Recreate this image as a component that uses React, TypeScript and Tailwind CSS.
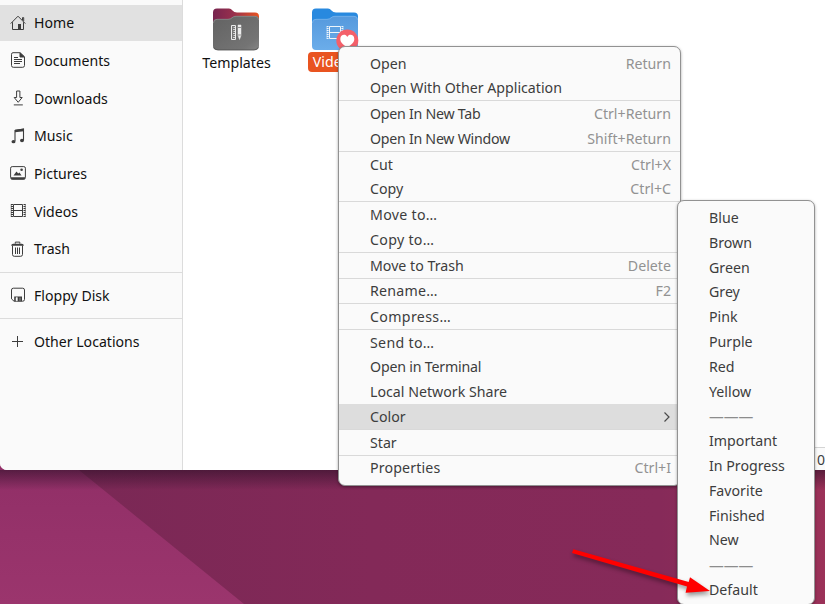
import type { ReactNode } from 'react'

interface MenuEntry {
  label: string
  accel?: string
  divider?: boolean
  active?: boolean
  tracking?: string
}

interface Place {
  label: string
  icon: ReactNode
  divider?: boolean
  active?: boolean
}

const ICON = 'h-4 w-4 shrink-0'

const PLACES: Place[] = [
  {
    label: 'Home',
    active: true,
    icon: (
      <svg viewBox="0 0 16 16" className={ICON} fill="none" stroke="#3d3d3d">
        <path d="M.7 8.6 8 1.2l7.3 7.4M2.5 7.2v7.3h11V7.2M12.5 5V2.6h1.2v3.6" />
        <path d="M8 9h3v5H8z" fill="#3d3d3d" stroke="none" />
      </svg>
    )
  },
  {
    label: 'Documents',
    icon: (
      <svg viewBox="0 0 16 16" className={ICON} fill="none" stroke="#3d3d3d">
        <path d="M3 .7h7.2l4.3 4.1v8.7q0 1.8-1.8 1.8H3.3q-1.8 0-1.8-1.8V2.3Q1.5.7 3 .7Z" />
        <path d="M10 1v4h4.3z" fill="#3d3d3d" />
        <path d="M4 5.5h4M4 7.5h8M4 9.5h8M4 11.5h6" />
      </svg>
    )
  },
  {
    label: 'Downloads',
    icon: (
      <svg viewBox="0 0 16 16" className={ICON} fill="none" stroke="#3d3d3d">
        <path d="M6.6 1h3.3v6.5h2.3l-4 4.8-4-4.8h2.4zM3.8 14.9h9" />
      </svg>
    )
  },
  {
    label: 'Music',
    icon: (
      <svg viewBox="0 0 16 16" className={ICON} fill="none" stroke="#3d3d3d">
        <path d="M5 13V2.4l8.5-1.2v11" strokeWidth="1.1" />
        <path d="M5 1.8 14 .6v2.7L5 4.3z" fill="#3d3d3d" stroke="none" />
        <ellipse cx="3.5" cy="13.7" rx="2" ry="1.6" fill="#3d3d3d" stroke="none" />
        <ellipse cx="12" cy="12.5" rx="2" ry="1.7" fill="#3d3d3d" stroke="none" />
      </svg>
    )
  },
  {
    label: 'Pictures',
    icon: (
      <svg viewBox="0 0 16 16" className={ICON} fill="none" stroke="#3d3d3d">
        <rect x=".6" y="1.6" width="14.8" height="12.6" rx="1.6" />
        <path d="M1 12.2h14v1q0 1.3-1.3 1.3H2.3Q1 14.5 1 13.2zM3.5 10.6l3-4 1.7 1.8 1.2-1 2.2 3.2z" fill="#3d3d3d" stroke="none" />
        <circle cx="11.6" cy="4.8" r="1.3" fill="#3d3d3d" stroke="none" />
      </svg>
    )
  },
  {
    label: 'Videos',
    icon: (
      <svg viewBox="0 0 16 16" className={ICON} fill="none" stroke="#3d3d3d">
        <path d="M3.5 1.5h9v12h-9zM3.5 7.5h9" />
        <path d="M2 1v13.5M14.5 1v13.5" strokeWidth="2" strokeDasharray="1 1" />
        <path d="M1.2 1v13M15.3 1v13" strokeWidth=".6" />
      </svg>
    )
  },
  {
    label: 'Trash',
    icon: (
      <svg viewBox="0 0 16 16" className={ICON} fill="none" stroke="#3d3d3d">
        <path d="M5.3 2.7V1.1h4.5v1.6" />
        <path d="M1.2 4.7q0-2 2-2h8.6q2 0 2 2z" fill="#3d3d3d" stroke="none" />
        <path d="M2.5 4.5v9q0 1.8 1.8 1.8h6.4q1.8 0 1.8-1.8v-9M5.5 6.5V13M7.5 6.5V13M9.5 6.5V13" />
      </svg>
    )
  },
  {
    label: 'Floppy Disk',
    divider: true,
    icon: (
      <svg viewBox="0 0 16 16" className={ICON} fill="none" stroke="#3d3d3d">
        <path d="M3.3 1.2h9.4q1.8 0 1.8 1.8v9.4q0 1.8-1.8 1.8H4l-2.5-2.3V3q0-1.8 1.8-1.8Z" />
        <path d="M4.2 9.5H12v4.7H4.2z" fill="#3d3d3d" stroke="none" />
        <path d="M6 10.6h1.4v3.2H6zM10 10.6v3.2" fill="#fafafa" stroke="#fafafa" strokeWidth=".5" />
      </svg>
    )
  },
  {
    label: 'Other Locations',
    divider: true,
    icon: (
      <svg viewBox="0 0 16 16" className={ICON} fill="none" stroke="#3d3d3d">
        <path d="M2 7.5h11M7.5 2v11" />
      </svg>
    )
  }
]

const FILE_MENU: MenuEntry[] = [
  { label: 'Open', accel: 'Return' },
  { label: 'Open With Other Application' },
  { label: 'Open In New Tab', accel: 'Ctrl+Return', divider: true, tracking: 'tracking-[-0.26px]' },
  { label: 'Open In New Window', accel: 'Shift+Return', tracking: 'tracking-[-0.27px]' },
  { label: 'Cut', accel: 'Ctrl+X', divider: true },
  { label: 'Copy', accel: 'Ctrl+C' },
  { label: 'Move to…', divider: true, tracking: 'tracking-[0.3px]' },
  { label: 'Copy to…', tracking: 'tracking-[0.3px]' },
  { label: 'Move to Trash', accel: 'Delete', divider: true },
  { label: 'Rename…', accel: 'F2', divider: true, tracking: 'tracking-[0.25px]' },
  { label: 'Compress…', divider: true, tracking: 'tracking-[0.35px]' },
  { label: 'Send to…', divider: true, tracking: 'tracking-[0.3px]' },
  { label: 'Open in Terminal', tracking: 'tracking-[-0.2px]' },
  { label: 'Local Network Share' },
  { label: 'Color', active: true },
  { label: 'Star', divider: true },
  { label: 'Properties', accel: 'Ctrl+I', divider: true, tracking: 'tracking-[0.15px]' }
]

const COLOR_MENU = [
  'Blue', 'Brown', 'Green', 'Grey', 'Pink', 'Purple', 'Red', 'Yellow',
  '———',
  'Important', 'In Progress', 'Favorite', 'Finished', 'New',
  '———',
  'Default'
]

function Wallpaper() {
  return (
    <svg className="absolute inset-0 h-full w-full" viewBox="0 0 825 604">
      <defs>
        <linearGradient id="dark" x1="0" x2="1" y1="0" y2="0">
          <stop offset="0.1" stopColor="#7a2855" />
          <stop offset="0.45" stopColor="#832958" />
          <stop offset="0.8" stopColor="#862a59" />
          <stop offset="1" stopColor="#9b3158" />
        </linearGradient>
        <linearGradient id="light" x1="0" x2="0" y1="0" y2="1">
          <stop offset="0" stopColor="#8f2e66" />
          <stop offset="1" stopColor="#9b356d" />
        </linearGradient>
      </defs>
      <path d="M0 440h825v164H0z" fill="url(#dark)" />
      <path d="M0 440h42l202 164H0z" fill="url(#light)" />
    </svg>
  )
}

function Sidebar() {
  return (
    <aside className="w-[183px] shrink-0 border-r border-[#dcdcdc] bg-[#fafafa] pt-[4.9px]">
      {PLACES.map((place) => (
        <div key={place.label}>
          {place.divider && <div className="mt-[5.2px] mb-[4.5px] h-px bg-[#dcdcdc]" />}
          <div
            className={`mb-[1.86px] flex h-[35.8px] items-center gap-2 pl-[10px] text-[14.1px] text-[#111] ${
              place.active ? 'bg-[#e1e1e1]' : ''
            }`}
          >
            {place.icon}
            <span>{place.label}</span>
          </div>
        </div>
      ))}
    </aside>
  )
}

function TemplatesFolder() {
  return (
    <svg width="46" height="43" viewBox="0 0 46 43" className="mr-[2px]">
      <defs>
        <linearGradient id="tab" x1="0" x2="1">
          <stop offset="0" stopColor="#77244f" />
          <stop offset="0.45" stopColor="#98304d" />
          <stop offset="1" stopColor="#e95420" />
        </linearGradient>
        <linearGradient id="body" x1="0" x2="1" y1="0" y2="1">
          <stop offset="0" stopColor="#626262" />
          <stop offset="0.8" stopColor="#747474" />
          <stop offset="1" stopColor="#858585" />
        </linearGradient>
      </defs>
      <path d="M4 .5h12q2 0 3.5 2T24 4.5h18q4 0 4 4V20H0V4.5Q0 .5 4 .5Z" fill="url(#tab)" />
      <path d="M4 11h11q2.5 0 4-1.5T23 8h19q4 0 4 4v26q0 4-4 4H4q-4 0-4-4V15q0-4 4-4Z" fill="url(#body)" />
      <path d="M.5 15q0-3.7 3.5-3.7h11q2.5 0 4-1.5t4-1.5h19q3.5 0 3.5 3.5" fill="none" stroke="#929292" strokeWidth=".7" />
      <path d="M1 39.5q1 2.5 4 2.5h36q3 0 4-2.500" fill="none" stroke="#4c4c4c" strokeWidth=".8" />
      <g fill="none" stroke="#ededed">
        <path d="M18.500 17.500h4v14h-4z" fill="#777" />
        <path d="M20.500 19.500h2M20 21.500h2.500M20.500 23.500h2M20 25.500h2.500M20.500 27.500h2M20 29.500h2.500" strokeWidth=".8" />
        <path d="M25 17h3v10.500l-1.500 4-1.500-4z" fill="#ededed" strokeWidth=".5" />
        <path d="M25 19.500h3M25 27h3" stroke="#6c6c6c" strokeWidth=".7" />
      </g>
    </svg>
  )
}

function VideosFolder() {
  return (
    <svg width="48" height="43" viewBox="0 0 48 43" className="ml-[2px]">
      <defs>
        <linearGradient id="blue" x1="0" x2="0" y1="0" y2="1">
          <stop offset="0" stopColor="#5599dd" />
          <stop offset="1" stopColor="#6badea" />
        </linearGradient>
      </defs>
      <path d="M4 .5h12q2 0 3.5 2T24 4.5h18q4 0 4 4V20H0V4.5Q0 .5 4 .5Z" fill="#2889df" />
      <path d="M4 11h11q2.5 0 4-1.5T23 8h19q4 0 4 4v26q0 4-4 4H4q-4 0-4-4V15q0-4 4-4Z" fill="url(#blue)" />
      <path d="M.5 15q0-3.7 3.5-3.7h11q2.5 0 4-1.5t4-1.5h19q3.5 0 3.5 3.5" fill="none" stroke="#7db8ef" strokeWidth=".7" />
      <g fill="none" stroke="#eef5fc">
        <path d="M17.5 18.5h11v12h-11zM17.5 24.5h11" />
        <path d="M15.7 18v13M30.3 18v13" strokeWidth="1.8" strokeDasharray="1 1" />
        <path d="M15 18v13M31 18v13" strokeWidth=".5" />
      </g>
      <circle cx="35.3" cy="32.5" r="11" fill="#f4606a" />
      <path d="M35.3 39.3c-4-2.600-7-4.800-7-8.300 0-4.500 5.200-5.500 7-2.100 1.800-3.400 7-2.400 7 2.100 0 3.500-3 5.700-7 8.300Z" fill="#fff" />
    </svg>
  )
}

function FileMenu() {
  return (
    <div className="absolute top-[46px] left-[338px] h-[440px] w-[343px] rounded-[7px] border border-[#929292] bg-[#fafafa] pt-[3.8px] shadow-[0_1px_3px_rgba(0,0,0,0.35)]">
      {FILE_MENU.map((item) => (
        <div key={item.label}>
          {item.divider && <div className="-mb-[0.1px] h-px bg-[#d9d9d9]" />}
          <div
            className={`flex h-[24.8px] items-center justify-between pr-[9px] pl-[31px] ${
              item.active ? 'bg-[#dddddd]' : ''
            }`}
          >
            <span className={item.tracking}>{item.label}</span>
            {item.accel && <span className="text-[#929292]">{item.accel}</span>}
            {item.active && (
              <svg width="8" height="12" viewBox="0 0 8 12" fill="none" stroke="#4a4a4a" strokeWidth="1.2">
                <path d="m1.5 1.5 4.5 4.5-4.5 4.5" />
              </svg>
            )}
          </div>
        </div>
      ))}
    </div>
  )
}

function ColorMenu() {
  return (
    <div className="absolute top-[200px] left-[677px] h-[405px] w-[138px] rounded-[7px] border border-[#929292] bg-[#fafafa] pt-[4.3px] shadow-[0_1px_3px_rgba(0,0,0,0.35)]">
      {COLOR_MENU.map((label, index) => (
        <div
          key={index}
          className={`flex h-[24.8px] items-center pl-[31px] ${
            label === '———' ? 'text-[14.8px] text-[#8c8c8c]' : ''
          }`}
        >
          {label}
        </div>
      ))}
    </div>
  )
}

function Arrow() {
  return (
    <svg
      className="absolute top-[540px] left-[565px] drop-shadow-[1px_3px_2px_rgba(0,0,0,0.4)]"
      width="150"
      height="64"
      viewBox="565 540 150 64"
      fill="#ff0000"
    >
      <path d="m573.4 549.2 115.3 32.9 1.3-4.8 20 13.6-24.4 1.8 1.4-6.2-115-33.4Z" />
    </svg>
  )
}

export default function App() {
  return (
    <div className="relative h-[604px] w-[825px] overflow-hidden bg-[#832958] font-['Noto_Sans','Open_Sans',sans-serif] text-[14.2px] whitespace-nowrap text-[#3d3d3d]">
      <Wallpaper />
      <div className="relative flex h-[470px] overflow-hidden rounded-bl-[7px] bg-white">
        <Sidebar />
        <main className="flex flex-1 flex-col justify-between">
          <div className="flex items-start pt-2">
            <div className="flex w-[107px] flex-col items-center text-[#111]">
              <TemplatesFolder />
              <span className="mt-[2px] leading-[20px]">Templates</span>
            </div>
            <div className="ml-[18px] flex w-[54px] flex-col items-center">
              <VideosFolder />
              <span className="mt-px rounded-[4px] bg-[#e95420] px-[4.5px] leading-[20px] text-white">Videos</span>
            </div>
          </div>
          <footer className="flex h-[23px] items-center self-end border-t border-l border-[#d4d4d4] bg-[#fafafa] pl-[6px] text-[14px]">
            <span className="w-[8px]">0</span>
          </footer>
        </main>
      </div>
      <div className="relative h-5 bg-gradient-to-b from-[#2e1028]/60 to-transparent" />
      <FileMenu />
      <ColorMenu />
      <Arrow />
    </div>
  )
}
